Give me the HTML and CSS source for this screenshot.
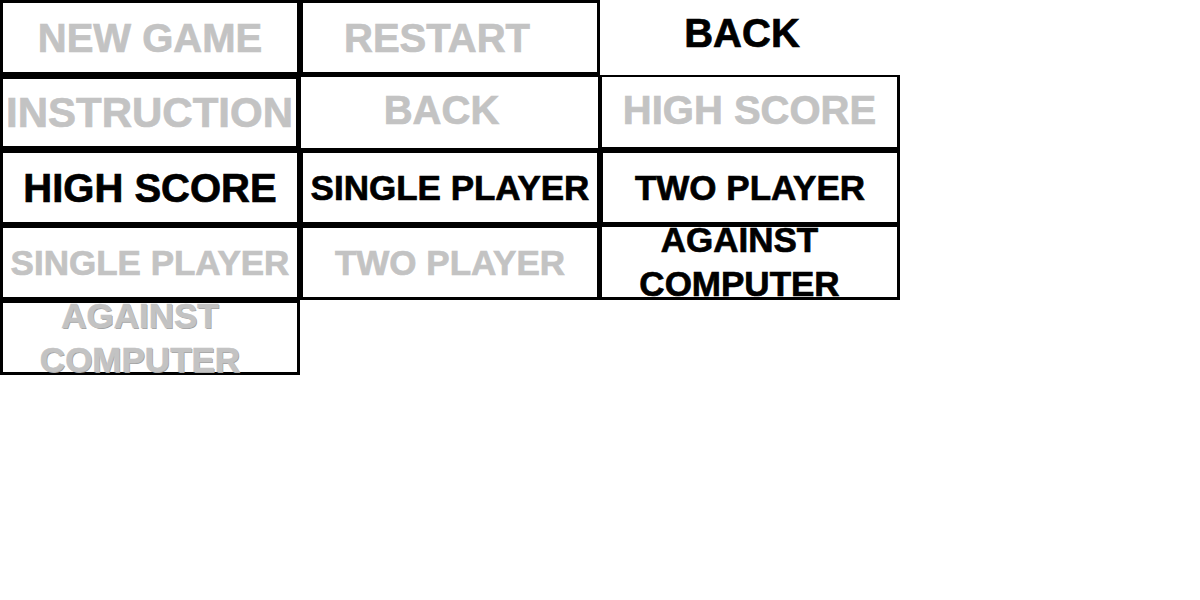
FILE: index.html
```html
<!DOCTYPE html>
<html lang="en">
<head>
<meta charset="utf-8">
<title>Menu buttons</title>
<link rel="stylesheet" href="styles.css">
</head>
<body>
<div class="sheet">
  <div class="btn btn--grey btn--lg">NEW GAME</div>
  <div class="btn btn--grey btn--lg btn--restart">RESTART</div>
  <div class="btn btn--bare btn--lg btn--back-top">BACK</div>

  <div class="btn btn--grey btn--xl btn--heavy">INSTRUCTION</div>
  <div class="btn btn--grey btn--lg btn--thin btn--back">BACK</div>
  <div class="btn btn--grey btn--lg btn--mid btn--score">HIGH SCORE</div>

  <div class="btn btn--lg">HIGH SCORE</div>
  <div class="btn btn--md">SINGLE PLAYER</div>
  <div class="btn btn--md">TWO PLAYER</div>

  <div class="btn btn--grey btn--md">SINGLE PLAYER</div>
  <div class="btn btn--grey btn--md">TWO PLAYER</div>
  <div class="btn btn--md btn--mid btn--two-line">AGAINST<br>COMPUTER</div>

  <div class="btn btn--grey btn--md btn--two-line btn--emboss">AGAINST<br>COMPUTER</div>
</div>
</body>
</html>
```

FILE: styles.css
```css
html, body {
  margin: 0;
  padding: 0;
  background: #ffffff;
}

.sheet {
  display: grid;
  grid-template-columns: repeat(3, 300px);
  grid-auto-rows: 75px;
  font-family: "Liberation Sans", Arial, sans-serif;
  font-weight: bold;
}

.btn {
  box-sizing: border-box;
  border: 3px solid #000;
  display: flex;
  align-items: center;
  justify-content: center;
  color: #000;
  line-height: 1;
  white-space: nowrap;
  text-align: center;
  -webkit-text-stroke: 0.7px currentColor;
}

.btn--grey { color: #c3c3c3; }

.btn--lg { font-size: 40px; }
.btn--xl { font-size: 42px; }
.btn--md { font-size: 35px; }

.btn--heavy { border-width: 4px 4px 4px 3px; }
.btn--thin { border-width: 2px 2px 2px 1px; }
.btn--mid { border-width: 2px 3px 3px 2px; }
.btn--bare { border-color: transparent; }

.btn--restart { padding-right: 26px; }
.btn--back-top { padding-right: 16px; padding-bottom: 9px; }
.btn--back { padding-right: 16px; padding-bottom: 6px; }
.btn--score { padding-bottom: 4px; }

.btn--two-line {
  line-height: 44px;
  padding-right: 20px;
  overflow: visible;
}

.btn--emboss {
  text-shadow: 1px 1px 0 #a0a0a0;
}
```
